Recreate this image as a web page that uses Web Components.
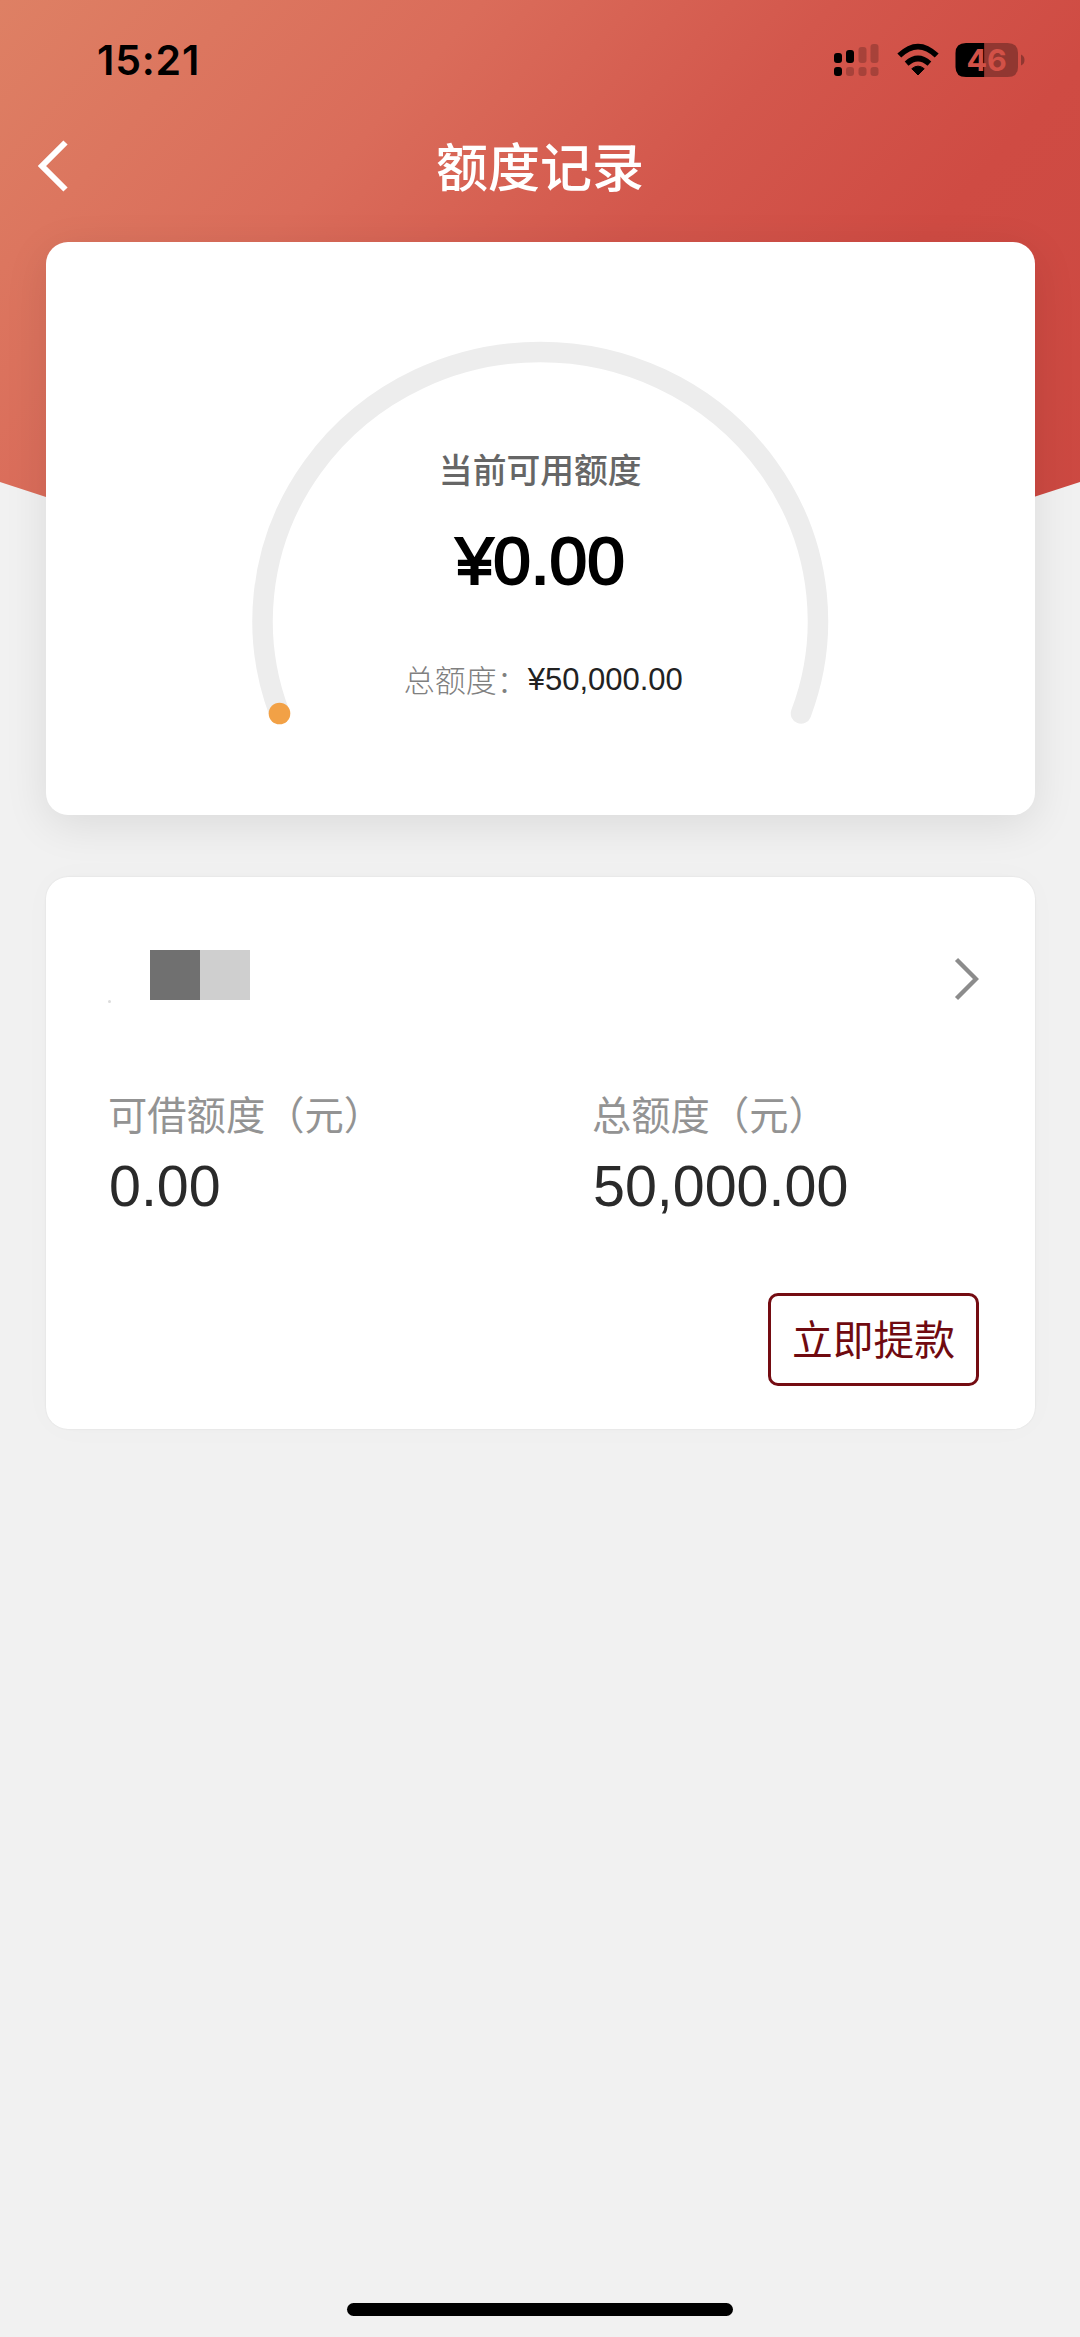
<!DOCTYPE html>
<html lang="zh-CN">
<head>
<meta charset="utf-8">
<title>额度记录</title>
<style>
html, body { margin: 0; padding: 0; background: #f1f1f1; }
body { font-family: "Liberation Sans", "Noto Sans CJK SC", sans-serif; }
</style>
</head>
<body>
<quota-page>
  <status-bar slot="top" time="15:21" battery="46"></status-bar>
  <nav-bar slot="top">额度记录</nav-bar>
  <quota-gauge>
    <span slot="label">当前可用额度</span>
    <span slot="amount">¥0.00</span>
    <span slot="total-label">总额度：</span>
    <span slot="total">¥50,000.00</span>
  </quota-gauge>
  <loan-card>
    <amount-item slot="items" label="可借额度（元）">0.00</amount-item>
    <amount-item slot="items" label="总额度（元）">50,000.00</amount-item>
    <outline-button slot="action">立即提款</outline-button>
  </loan-card>
</quota-page>
<script>
const define = (name, html, setup) => {
  const tpl = document.createElement('template');
  tpl.innerHTML = html;
  customElements.define(name, class extends HTMLElement {
    constructor() {
      super();
      this.attachShadow({ mode: 'open' }).append(tpl.content.cloneNode(true));
    }
    connectedCallback() { if (setup) setup(this, this.shadowRoot); }
  });
};

define('quota-page', `
<style>
:host { display: grid; width: 1080px; height: 2337px; background: #f1f1f1; overflow: hidden; }
.backdrop, .content { grid-area: 1 / 1; }
.backdrop { height: 658px; clip-path: polygon(0 0, 1080px 0, 1080px 482px, 540px 658px, 0 482px);
  background: linear-gradient(132deg, #de8064 0%, #da6c5a 29%, #d3574c 50%, #cf4b43 68%, #cb4841 100%); }
.content { display: flex; flex-direction: column; z-index: 1; }
.cards { display: flex; flex-direction: column; gap: 62px; padding: 0 45.5px 0 46px; flex: 1; }
.home { align-self: center; width: 386px; height: 13px; border-radius: 7px; background: #000; margin-bottom: 21px; }
</style>
<div class="backdrop"></div>
<div class="content">
  <slot name="top"></slot>
  <div class="cards"><slot></slot></div>
  <div class="home"></div>
</div>`);

define('status-bar', `
<style>
:host { display: flex; justify-content: space-between; align-items: center; height: 119px; box-sizing: border-box;
  padding: 0 55px 0 97px; font-family: Inter, sans-serif; }
.time { font-size: 41px; font-weight: 600; line-height: 40px; letter-spacing: 0.8px; color: #000; }
.icons { display: flex; align-items: center; }
svg { display: block; }
</style>
<span class="time"></span>
<div class="icons">
  <svg width="191" height="36" viewBox="0 0 191 36">
    <g fill="#000">
      <rect x="0" y="11" width="8" height="10" rx="3"/><rect x="12" y="8" width="8" height="13" rx="3"/>
      <rect x="0" y="25" width="8" height="9" rx="3"/>
      <g opacity=".2"><rect x="24.5" y="5" width="8" height="16" rx="3"/><rect x="36.5" y="2" width="8" height="19" rx="3"/>
      <rect x="12" y="25" width="8" height="9" rx="3"/><rect x="24.5" y="25" width="8" height="9" rx="3"/><rect x="36.5" y="25" width="8" height="9" rx="3"/></g>
      <path d="M84 33 L77.8 26.7 Q84 21.6 90.2 26.7 Z" stroke="#000" stroke-width="1" stroke-linejoin="round"/>
    </g>
    <g fill="none" stroke="#000" stroke-width="5.6">
      <path d="M72.6 21.6 Q84 11.4 95.4 21.6"/><path d="M65.3 13.6 Q84 -4.400 102.700 13.600"/>
    </g>
    <path d="M132 1 H150.5 V35 H132 Q121.5 35 121.5 25 V11 Q121.5 1 132 1 Z" fill="#000"/>
    <path d="M150.5 1 H173.500 Q184 1 184 11 V25 Q184 35 173.500 35 H150.500 Z" fill="#913731"/>
    <path d="M187 12.500 Q190.500 14 190.500 18 Q190.500 22 187 23.500 Z" fill="#913731"/>
    <text class="bat" x="152.600" y="28.500" text-anchor="middle" font-family="Inter, sans-serif" font-size="30.500" font-weight="700" fill="#d25147"></text>
  </svg>
</div>`, (el, root) => {
  root.querySelector('.time').textContent = el.getAttribute('time');
  root.querySelector('.bat').textContent = el.getAttribute('battery');
});

define('nav-bar', `
<style>
:host { display: grid; grid-template-columns: 80px 1fr 80px; align-items: center; height: 122.500px; box-sizing: border-box; padding-bottom: 24px; }
svg { display: block; margin-left: 36px; margin-top: -4px; }
h1 { margin: -6px 0 0; text-align: center; color: #fff; font: 500 52px/60px "Noto Sans CJK SC", sans-serif; }
</style>
<svg width="34" height="52" viewBox="0 0 34 52"><path d="M29.500 2.500 L6 26 L29.500 49.500" fill="none" stroke="#fff" stroke-width="6"/></svg>
<h1><slot></slot></h1>`);

define('quota-gauge', `
<style>
:host { display: grid; height: 573.500px; border-radius: 22px; background: #fff; box-shadow: 0 10px 44px rgba(0,0,0,.095); }
svg, .texts { grid-area: 1 / 1; }
svg { display: block; }
.texts { display: flex; flex-direction: column; align-items: center; z-index: 1; padding-top: 202px; }
.label { font: 500 33.800px/50px "Noto Sans CJK SC", sans-serif; color: #666; }
.amount { font-size: 67.500px; line-height: 70px; margin-top: 32px; color: #000; -webkit-text-stroke: 2.200px #000; }
.total { display: flex; align-items: flex-start; margin-top: 60px; padding-left: 6px; font-size: 31px; line-height: 48px; color: #222; }
.total .name { font: 300 31px/46px "Noto Sans CJK SC", sans-serif; color: #808080; }
</style>
<svg width="988" height="573" viewBox="0 0 988 573">
  <path d="M233.500 471.500 A277.700 269 0 1 1 755 471.500" fill="none" stroke="#ededed" stroke-width="20.500" stroke-linecap="round"/>
  <circle cx="233.500" cy="471.500" r="10.800" fill="#f2a146"/>
</svg>
<div class="texts">
  <div class="label"><slot name="label"></slot></div>
  <div class="amount"><slot name="amount"></slot></div>
  <div class="total"><span class="name"><slot name="total-label"></slot></span><slot name="total"></slot></div>
</div>`);

define('loan-card', `
<style>
:host { display: flex; flex-direction: column; height: 552px; box-sizing: border-box; border-radius: 22px; background: #fff;
  padding: 73px 55.500px 43.500px 62px; box-shadow: 0 0 2px rgba(0,0,0,.09), 0 0 34px rgba(0,0,0,.018); }
.head { display: flex; justify-content: space-between; align-items: center; height: 58px; }
.mask { display: flex; align-items: flex-end; margin-top: -8px; }
.speck { width: 3px; height: 3px; border-radius: 50%; background: #dcdcdc; margin: 0 39px -3px 0; }
.mask i { width: 50px; height: 50px; background: #707070; }
.mask i + i { background: #cfcfcf; }
.items { display: grid; grid-template-columns: 484px 1fr; margin-top: 76px; }
.action { display: flex; justify-content: flex-end; margin-top: auto; }
svg { display: block; }
</style>
<div class="head">
  <div class="mask"><span class="speck"></span><i></i><i></i></div>
  <svg width="26" height="46" viewBox="0 0 26 46"><path d="M3.500 3.500 L23 23 L3.500 42.500" fill="none" stroke="#8c8c8c" stroke-width="4.400"/></svg>
</div>
<div class="items"><slot name="items"></slot></div>
<div class="action"><slot name="action"></slot></div>`);

define('amount-item', `
<style>
:host { display: flex; flex-direction: column; }
.label { font: 400 39.300px/58px "Noto Sans CJK SC", sans-serif; color: #939393; white-space: nowrap; }
.value { font-size: 57.400px; line-height: 66px; margin-top: 11px; padding-left: 1px; color: #2a2a2a; }
</style>
<div class="label"></div><div class="value"><slot></slot></div>`, (el, root) => {
  root.querySelector('.label').textContent = el.getAttribute('label');
});

define('outline-button', `
<style>
:host { display: block; }
button { display: block; width: 211px; height: 92.500px; box-sizing: border-box; padding: 0 0 2px; border: 3px solid #740c12;
  border-radius: 10px; background: #fff; color: #700a10; font: 400 40.800px/60px "Noto Sans CJK SC", sans-serif; white-space: nowrap; }
</style>
<button><slot></slot></button>`);
</script>
</body>
</html>
